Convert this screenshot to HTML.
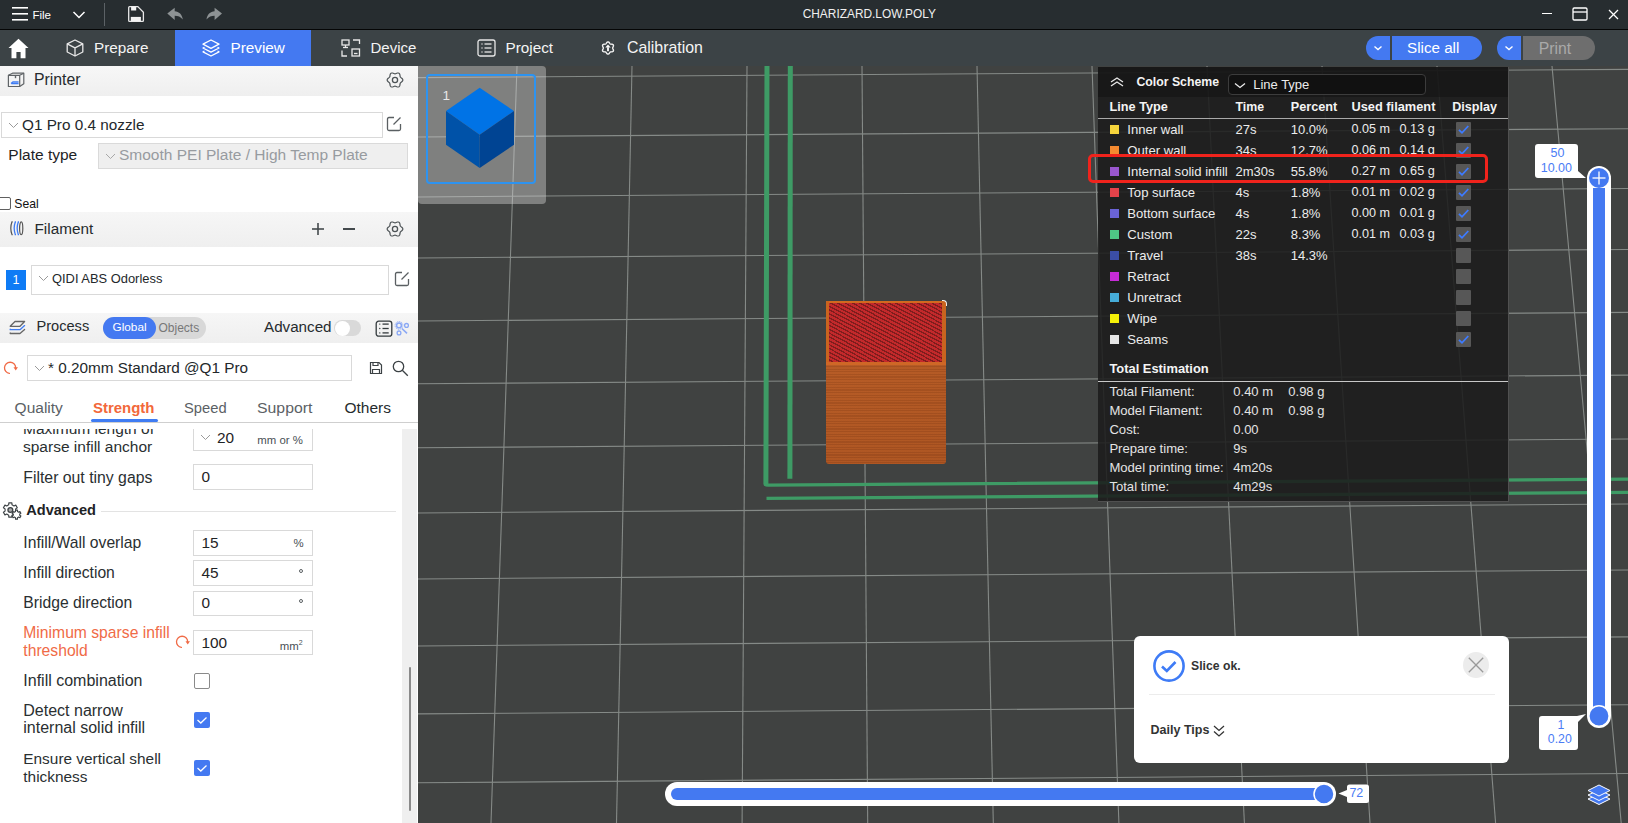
<!DOCTYPE html>
<html><head><meta charset="utf-8"><title>QIDI Studio</title>
<style>
*{margin:0;padding:0;box-sizing:border-box}
html,body{width:1628px;height:823px;overflow:hidden;background:#404241;font-family:"Liberation Sans",sans-serif;color:#262626}
.a{position:absolute}
.t{position:absolute;white-space:nowrap;line-height:1}
/* title bar */
#titlebar{left:0;top:0;width:1628px;height:29px;background:#272d30}
#titlesep{left:0;top:28.6px;width:1628px;height:1.4px;background:#050606}
#tabbar{left:0;top:30px;width:1628px;height:36px;background:#3c4346}
#ptab{left:175px;top:30px;width:136px;height:36px;background:#4479f1}
.wt{color:#fff}
/* sidebar */
#sidebar{left:0;top:66px;width:418px;height:757px;background:#fff;overflow:hidden}
.hdr{position:absolute;left:0;width:418px;background:linear-gradient(#f6f6f6,#f0f0f0)}
.box{position:absolute;border:1px solid #d9d9d9;background:#fff}
.lbl{position:absolute;white-space:nowrap;line-height:1;font-size:15.5px;color:#2a2f31}
.val{position:absolute;white-space:nowrap;line-height:1;font-size:15px;color:#1f2426}
.unit{position:absolute;white-space:nowrap;line-height:1;font-size:11.5px;color:#4a5055}
.chk{position:absolute;width:16px;height:16px;border-radius:1px}
/* viewport */
#vp{left:418px;top:66px;width:1210px;height:757px;background:#404241;overflow:hidden}
#grid line{stroke:#858a87;stroke-width:1.1}
/* legend panel */
#legend{left:1098px;top:66px;width:410px;height:436px;background:rgba(32,32,32,0.93);border-right:1px solid #4d4d4d;border-bottom:1px solid #4d4d4d}
.lt{position:absolute;white-space:nowrap;line-height:1;font-size:13px;color:#e8e8e8}
.lb{position:absolute;white-space:nowrap;line-height:1;font-size:12.7px;color:#f2f2f2;font-weight:bold}
.sw{position:absolute;width:9px;height:9px}
.dchk{position:absolute;width:15px;height:15px;background:#565656;border-radius:1px}

</style></head>
<body>
<div class="a" id="titlebar"></div><div class="a" id="titlesep"></div>
<svg class="a" style="left:11px;top:6px" width="18" height="16" viewBox="0 0 18 16"><g stroke="#fff" stroke-width="1.6"><line x1="1" y1="1.8" x2="17" y2="1.8"/><line x1="1" y1="7.8" x2="17" y2="7.8"/><line x1="1" y1="13.8" x2="17" y2="13.8"/></g></svg>
<div class="t" style="left:32.4px;top:8.9px;font-size:11.6px;color:#fff">File</div>
<svg class="a" style="left:72px;top:10px" width="14" height="10" viewBox="0 0 14 10"><polyline points="1.5,2 7,7.5 12.5,2" fill="none" stroke="#fff" stroke-width="1.5"/></svg>
<div class="a" style="left:104.0px;top:3.0px;width:1.0px;height:23.0px;background:#5c6266"></div>
<svg class="a" style="left:127px;top:5px" width="18" height="18" viewBox="0 0 18 18"><path d="M1.7 2.5 Q1.7 1.6 2.6 1.6 H10.8 L16.4 7.2 V15.4 Q16.4 16.3 15.5 16.3 H2.6 Q1.7 16.3 1.7 15.4 Z" fill="none" stroke="#e8e8e8" stroke-width="1.3"/><rect x="4.1" y="1.6" width="5.1" height="3.9" fill="#f4f4f4"/><rect x="3.8" y="11.9" width="10.1" height="4.4" fill="#f4f4f4"/></svg>
<svg class="a" style="left:166px;top:7px" width="18" height="14" viewBox="0 0 18 14"><path d="M1.3 6.5 L8.7 0.7 V4.3 C13 4.6 16.3 7.5 16.8 12.6 C14.5 9.8 12 8.8 8.7 8.8 V12.9 Z" fill="#8d9294"/></svg>
<svg class="a" style="left:205px;top:7px" width="18" height="14" viewBox="0 0 18 14"><path d="M17 6.5 L9.6 0.7 V4.3 C5.3 4.6 2 7.5 1.5 12.6 C3.8 9.8 6.3 8.8 9.6 8.8 V12.9 Z" fill="#8d9294"/></svg>
<div class="t" style="left:802.7px;top:8.5px;font-size:11.9px;color:#f0f0f0">CHARIZARD.LOW.POLY</div>
<div class="a" style="left:1542.0px;top:13.0px;width:10.0px;height:1.3px;background:#fff"></div>
<svg class="a" style="left:1572px;top:7px" width="16" height="14" viewBox="0 0 16 14"><rect x="1" y="1" width="14" height="12" rx="1.2" fill="none" stroke="#fff" stroke-width="1.3"/><line x1="1" y1="5" x2="15" y2="5" stroke="#fff" stroke-width="1.3"/></svg>
<svg class="a" style="left:1608px;top:9px" width="11" height="11" viewBox="0 0 11 11"><g stroke="#fff" stroke-width="1.2"><line x1="1" y1="1" x2="10" y2="10"/><line x1="10" y1="1" x2="1" y2="10"/></g></svg>
<div class="a" id="tabbar"></div><div class="a" id="ptab"></div>
<svg class="a" style="left:8px;top:38px" width="21" height="21" viewBox="0 0 21 21"><path d="M10.5 0.8 L20.5 10 H17.5 V20.3 H12.6 V14 H8.4 V20.3 H3.5 V10 H0.5 Z" fill="#fff"/></svg>
<svg class="a" style="left:66px;top:39px" width="18" height="18" viewBox="0 0 18 18"><g fill="none" stroke="#e8e8e8" stroke-width="1.3" stroke-linejoin="round"><path d="M9 1 L16.8 4.8 V13 L9 17 L1.2 13 V4.8 Z"/><path d="M1.2 4.8 L9 8.8 L16.8 4.8 M9 8.8 V17"/></g></svg>
<div class="t" style="left:94.0px;top:39.8px;font-size:15.3px;color:#f4f4f4">Prepare</div>
<svg class="a" style="left:202px;top:39px" width="18" height="18" viewBox="0 0 18 18"><g fill="none" stroke="#fff" stroke-width="1.3" stroke-linejoin="round"><path d="M9 1 L17 5.2 L9 9.4 L1 5.2 Z"/><path d="M2.5 8.2 L1 9 L9 13.2 L17 9 L15.5 8.2"/><path d="M2.5 12 L1 12.8 L9 17 L17 12.8 L15.5 12"/></g></svg>
<div class="t" style="left:230.5px;top:39.8px;font-size:15.3px;color:#fff">Preview</div>
<svg class="a" style="left:341px;top:39px" width="20" height="18" viewBox="0 0 20 18"><g fill="none" stroke="#e8e8e8" stroke-width="1.3"><rect x="1" y="1" width="7" height="5"/><line x1="4.5" y1="6" x2="4.5" y2="8.5"/><line x1="2" y1="8.5" x2="7" y2="8.5"/><path d="M12 1 H18.5 V5"/><path d="M1 11.5 V17 H6"/><rect x="11" y="10" width="7.5" height="7"/><line x1="13" y1="14.5" x2="16.5" y2="14.5"/></g></svg>
<div class="t" style="left:370.5px;top:39.8px;font-size:15.0px;color:#f4f4f4">Device</div>
<svg class="a" style="left:477px;top:39px" width="19" height="18" viewBox="0 0 19 18"><g fill="none" stroke="#e8e8e8" stroke-width="1.3"><rect x="1" y="1" width="17" height="16" rx="2"/><line x1="4.5" y1="5" x2="5.5" y2="5"/><line x1="7.5" y1="5" x2="14.5" y2="5"/><line x1="4.5" y1="9" x2="5.5" y2="9"/><line x1="7.5" y1="9" x2="14.5" y2="9"/><line x1="4.5" y1="13" x2="5.5" y2="13"/><line x1="7.5" y1="13" x2="14.5" y2="13"/></g></svg>
<div class="t" style="left:505.5px;top:39.8px;font-size:15.3px;color:#f4f4f4">Project</div>
<svg class="a" style="left:600px;top:40px" width="16" height="16" viewBox="0 0 16 16"><path d="M12.65 8.00 L12.73 8.41 L12.95 8.87 L13.22 9.40 L13.43 9.98 L13.48 10.56 L13.33 11.07 L12.96 11.47 L12.42 11.71 L11.82 11.82 L11.23 11.85 L10.72 11.89 L10.33 12.03 L10.01 12.31 L9.72 12.72 L9.40 13.22 L9.00 13.69 L8.53 14.03 L8.00 14.15 L7.47 14.03 L7.00 13.69 L6.60 13.22 L6.28 12.72 L5.99 12.31 L5.68 12.03 L5.28 11.89 L4.77 11.85 L4.18 11.82 L3.58 11.71 L3.04 11.47 L2.67 11.08 L2.52 10.56 L2.57 9.98 L2.78 9.40 L3.05 8.87 L3.27 8.41 L3.35 8.00 L3.27 7.59 L3.05 7.13 L2.78 6.60 L2.57 6.02 L2.52 5.44 L2.67 4.92 L3.04 4.53 L3.58 4.29 L4.18 4.18 L4.77 4.15 L5.28 4.11 L5.67 3.97 L5.99 3.69 L6.28 3.28 L6.60 2.78 L7.00 2.31 L7.47 1.97 L8.00 1.85 L8.53 1.97 L9.00 2.31 L9.40 2.78 L9.72 3.28 L10.01 3.69 L10.32 3.97 L10.72 4.11 L11.23 4.15 L11.82 4.18 L12.42 4.29 L12.96 4.53 L13.33 4.93 L13.48 5.44 L13.43 6.02 L13.22 6.60 L12.95 7.13 L12.73 7.59 Z" fill="none" stroke="#f0f0f0" stroke-width="1.4" stroke-linejoin="round"/><polygon points="8,4.4 5.3,7.5 10.7,7.5" fill="#fff"/><rect x="7.1" y="7.3" width="1.8" height="3.9" fill="#fff"/></svg>
<div class="t" style="left:627.0px;top:39.7px;font-size:15.9px;color:#f4f4f4">Calibration</div>
<div class="a" style="left:1366.0px;top:36.0px;width:24.0px;height:24.0px;background:#4479f1;border-radius:12px 0 0 12px"></div>
<div class="a" style="left:1392.0px;top:36.0px;width:90.0px;height:24.0px;background:#4479f1;border-radius:0 12px 12px 0"></div>
<svg class="a" style="left:1373px;top:44px" width="10" height="8" viewBox="0 0 10 8"><polyline points="1.5,2.5 5,5.5 8.5,2.5" fill="none" stroke="#fff" stroke-width="1.4"/></svg>
<div class="t" style="left:1407.0px;top:40.0px;font-size:15.2px;color:#fff">Slice all</div>
<div class="a" style="left:1497.0px;top:36.0px;width:24.0px;height:24.0px;background:#4479f1;border-radius:12px 0 0 12px"></div>
<div class="a" style="left:1523.0px;top:36.0px;width:72.0px;height:24.0px;background:#6e6e6e;border-radius:0 12px 12px 0"></div>
<svg class="a" style="left:1504px;top:44px" width="10" height="8" viewBox="0 0 10 8"><polyline points="1.5,2.5 5,5.5 8.5,2.5" fill="none" stroke="#fff" stroke-width="1.4"/></svg>
<div class="t" style="left:1538.7px;top:40.5px;font-size:15.8px;color:#a9a9a9">Print</div><div class="a" id="sidebar">
<div class="a" style="left:0.0px;top:0.0px;width:418.0px;height:30.0px;background:linear-gradient(#f7f7f7,#efefef)"></div>
<svg class="a" style="left:4px;top:2px" width="26" height="24" viewBox="0 0 26 24"><g fill="none" stroke="#5f6366" stroke-width="1.2" stroke-linejoin="round"><path d="M4.4 18.5 V7.3 L8.5 5.2 H19.8 V15.7 L15.7 18.5 Z"/><path d="M4.4 7.3 H15.7 V18.5 M15.7 7.3 L19.8 5.2"/><path d="M11.5 7.3 V10.2" stroke-width="1.4"/></g><g fill="none" stroke="#3f7cf3" stroke-width="1.3"><path d="M7 15.6 L9 14 H14.6 M7.3 15.6 H14.6"/></g></svg>
<div class="t" style="left:34.0px;top:6.3px;font-size:15.8px;color:#262b2e">Printer</div>
<svg class="a" style="left:386px;top:5px" width="18" height="18" viewBox="0 0 18 18"><path d="M16.85 9.00 L16.71 9.67 L16.31 10.29 L15.76 10.81 L15.18 11.25 L14.68 11.65 L14.33 12.07 L14.13 12.59 L14.04 13.23 L13.95 13.95 L13.77 14.69 L13.44 15.34 L12.93 15.80 L12.27 16.01 L11.54 15.98 L10.81 15.76 L10.14 15.48 L9.55 15.24 L9.00 15.15 L8.45 15.24 L7.86 15.48 L7.19 15.76 L6.46 15.98 L5.73 16.01 L5.08 15.80 L4.56 15.34 L4.23 14.69 L4.05 13.95 L3.96 13.23 L3.87 12.59 L3.67 12.08 L3.32 11.65 L2.82 11.25 L2.24 10.81 L1.69 10.29 L1.29 9.67 L1.15 9.00 L1.29 8.33 L1.69 7.71 L2.24 7.19 L2.82 6.75 L3.32 6.35 L3.67 5.92 L3.87 5.41 L3.96 4.77 L4.05 4.05 L4.23 3.31 L4.56 2.66 L5.07 2.20 L5.73 1.99 L6.46 2.02 L7.19 2.24 L7.86 2.52 L8.45 2.76 L9.00 2.85 L9.55 2.76 L10.14 2.52 L10.81 2.24 L11.54 2.02 L12.27 1.99 L12.92 2.20 L13.44 2.66 L13.77 3.31 L13.95 4.05 L14.04 4.77 L14.13 5.41 L14.33 5.93 L14.68 6.35 L15.18 6.75 L15.76 7.19 L16.31 7.71 L16.71 8.33 Z" fill="none" stroke="#4d5356" stroke-width="1.2" stroke-linejoin="round"/><circle cx="9" cy="9" r="2.6" fill="none" stroke="#4d5356" stroke-width="1.3"/></svg>
<div class="box" style="left:1.0px;top:46.0px;width:382.0px;height:26.0px;"></div>
<svg class="a" style="left:8px;top:56px" width="11" height="7" viewBox="0 0 11 7"><polyline points="1,1 5.5,5.5 10,1" fill="none" stroke="#9a9a9a" stroke-width="1"/></svg>
<div class="t" style="left:22.0px;top:51.1px;font-size:15.3px;color:#23282b">Q1 Pro 0.4 nozzle</div>
<svg class="a" style="left:386px;top:50px" width="16" height="16" viewBox="0 0 16 16"><path d="M8 1.5 H3 Q1.5 1.5 1.5 3 V13 Q1.5 14.5 3 14.5 H13 Q14.5 14.5 14.5 13 V8" fill="none" stroke="#5a5f62" stroke-width="1.3"/><line x1="7.5" y1="8.5" x2="14.5" y2="1.5" stroke="#5a5f62" stroke-width="1.3"/></svg>
<div class="t" style="left:8.3px;top:81.0px;font-size:15.5px;color:#1e2326">Plate type</div>
<div class="box" style="left:98.0px;top:77.0px;width:310.0px;height:26.0px;background:#efefef;border-color:#dadada"></div>
<svg class="a" style="left:105px;top:87px" width="11" height="7" viewBox="0 0 11 7"><polyline points="1,1 5.5,5.5 10,1" fill="none" stroke="#a8a8a8" stroke-width="1"/></svg>
<div class="t" style="left:119.0px;top:81.3px;font-size:15.5px;color:#979ba0">Smooth PEI Plate / High Temp Plate</div>
<div class="a" style="left:-3.0px;top:131.0px;width:13.5px;height:13.0px;border:1px solid #5f5f5f;border-radius:2px;background:#fff"></div>
<div class="t" style="left:14.3px;top:131.5px;font-size:12.2px;color:#111">Seal</div>
<div class="a" style="left:0.0px;top:146.0px;width:418.0px;height:35.0px;background:linear-gradient(#f6f6f6,#efefef)"></div>
<svg class="a" style="left:9px;top:155px" width="16" height="15" viewBox="0 0 16 15"><g fill="none" stroke-width="1.2"><path d="M3.7 0.8 H3 Q0.6 7.2 3 13.6 H3.7" stroke="#555"/><path d="M7 1 H6.3 Q4 7.2 6.3 13.6 H7" stroke="#3f7cf3" stroke-width="1.3"/><path d="M10 1 H9.3 Q7 7.2 9.3 13.6 H10" stroke="#3f7cf3" stroke-width="1.3"/><ellipse cx="12.2" cy="7.2" rx="1.6" ry="6.4" stroke="#555"/></g></svg>
<div class="t" style="left:34.5px;top:154.9px;font-size:15.3px;color:#262b2e">Filament</div>
<svg class="a" style="left:311px;top:156px" width="14" height="14" viewBox="0 0 14 14"><g stroke="#444a4d" stroke-width="1.6"><line x1="7" y1="1" x2="7" y2="13"/><line x1="1" y1="7" x2="13" y2="7"/></g></svg>
<div class="a" style="left:343.0px;top:162.2px;width:12.0px;height:1.6px;background:#444a4d"></div>
<svg class="a" style="left:386px;top:154px" width="18" height="18" viewBox="0 0 18 18"><path d="M16.85 9.00 L16.71 9.67 L16.31 10.29 L15.76 10.81 L15.18 11.25 L14.68 11.65 L14.33 12.07 L14.13 12.59 L14.04 13.23 L13.95 13.95 L13.77 14.69 L13.44 15.34 L12.93 15.80 L12.27 16.01 L11.54 15.98 L10.81 15.76 L10.14 15.48 L9.55 15.24 L9.00 15.15 L8.45 15.24 L7.86 15.48 L7.19 15.76 L6.46 15.98 L5.73 16.01 L5.08 15.80 L4.56 15.34 L4.23 14.69 L4.05 13.95 L3.96 13.23 L3.87 12.59 L3.67 12.08 L3.32 11.65 L2.82 11.25 L2.24 10.81 L1.69 10.29 L1.29 9.67 L1.15 9.00 L1.29 8.33 L1.69 7.71 L2.24 7.19 L2.82 6.75 L3.32 6.35 L3.67 5.92 L3.87 5.41 L3.96 4.77 L4.05 4.05 L4.23 3.31 L4.56 2.66 L5.07 2.20 L5.73 1.99 L6.46 2.02 L7.19 2.24 L7.86 2.52 L8.45 2.76 L9.00 2.85 L9.55 2.76 L10.14 2.52 L10.81 2.24 L11.54 2.02 L12.27 1.99 L12.92 2.20 L13.44 2.66 L13.77 3.31 L13.95 4.05 L14.04 4.77 L14.13 5.41 L14.33 5.93 L14.68 6.35 L15.18 6.75 L15.76 7.19 L16.31 7.71 L16.71 8.33 Z" fill="none" stroke="#4d5356" stroke-width="1.2" stroke-linejoin="round"/><circle cx="9" cy="9" r="2.6" fill="none" stroke="#4d5356" stroke-width="1.3"/></svg>
<div class="a" style="left:6.0px;top:204.0px;width:20.0px;height:20.0px;background:#0e7bf5"></div>
<div class="t" style="left:12.5px;top:207.5px;font-size:12.5px;color:#fff">1</div>
<div class="box" style="left:31.0px;top:199.0px;width:358.0px;height:30.0px;"></div>
<svg class="a" style="left:38px;top:209px" width="11" height="7" viewBox="0 0 11 7"><polyline points="1,1 5.5,5.5 10,1" fill="none" stroke="#9a9a9a" stroke-width="1"/></svg>
<div class="t" style="left:52.0px;top:206.7px;font-size:12.9px;color:#23282b">QIDI ABS Odorless</div>
<svg class="a" style="left:394px;top:205px" width="16" height="16" viewBox="0 0 16 16"><path d="M8 1.5 H3 Q1.5 1.5 1.5 3 V13 Q1.5 14.5 3 14.5 H13 Q14.5 14.5 14.5 13 V8" fill="none" stroke="#5a5f62" stroke-width="1.3"/><line x1="7.5" y1="8.5" x2="14.5" y2="1.5" stroke="#5a5f62" stroke-width="1.3"/></svg>
<div class="a" style="left:0.0px;top:247.0px;width:418.0px;height:30.0px;background:linear-gradient(#f6f6f6,#efefef)"></div>
<svg class="a" style="left:9px;top:254px" width="17" height="15" viewBox="0 0 17 15"><g fill="none" stroke-width="1.3" stroke-linejoin="round" stroke-linecap="round"><path d="M1.2 6.3 L6 1.5 H15.6 L11 6.3 Z" stroke="#666"/><path d="M1.2 9.2 V9.7 H11 L15.6 5.6" stroke="#3f7cf3"/><path d="M1.2 13 V13.5 H11 L15.6 9.4" stroke="#666"/></g></svg>
<div class="t" style="left:36.5px;top:252.7px;font-size:14.6px;color:#262b2e">Process</div>
<div class="a" style="left:103.0px;top:251.0px;width:103.0px;height:22.0px;background:#d8d8d8;border-radius:11px"></div>
<div class="a" style="left:103.0px;top:251.0px;width:53.0px;height:22.0px;background:#4479f1;border-radius:11px"></div>
<div class="t" style="left:112.5px;top:255.6px;font-size:11.8px;color:#fff">Global</div>
<div class="t" style="left:158.5px;top:255.6px;font-size:12.0px;color:#777">Objects</div>
<div class="t" style="left:264.0px;top:252.6px;font-size:15.2px;color:#262b2e">Advanced</div>
<div class="a" style="left:334.0px;top:254.0px;width:27.0px;height:16.0px;background:#d9d9d9;border-radius:8px"></div>
<div class="a" style="left:335.0px;top:254.5px;width:14.5px;height:15.0px;background:#fff;border-radius:50%"></div>
<svg class="a" style="left:374.5px;top:253.5px" width="18" height="17" viewBox="0 0 18 17"><g fill="none" stroke="#333a3d" stroke-width="1.3"><rect x="1.2" y="1.2" width="15.6" height="15" rx="2.5"/><line x1="7.5" y1="4.1" x2="13.7" y2="4.1"/><line x1="7.5" y1="8.5" x2="13.7" y2="8.5"/><line x1="7.5" y1="12.9" x2="13.7" y2="12.9"/></g><g fill="#333a3d"><circle cx="4.8" cy="4.1" r="0.7"/><circle cx="4.8" cy="8.5" r="0.7"/><circle cx="4.8" cy="12.9" r="0.7"/></g></svg>
<svg class="a" style="left:394px;top:253.5px" width="16" height="16" viewBox="0 0 16 16"><g fill="none" stroke="#8aa8f5"><circle cx="5" cy="5.4" r="2.4" stroke-width="1.5"/><circle cx="5" cy="5.4" r="3.9" stroke-width="0.9" stroke-dasharray="1.2 0.8"/><circle cx="12.5" cy="5.4" r="1.9" stroke-width="1.3"/><circle cx="5" cy="12.9" r="1.9" stroke-width="1.3"/><line x1="7.9" y1="8.5" x2="13" y2="13.3" stroke-width="1.6"/></g></svg>
<svg class="a" style="left:0px;top:289px" width="20" height="20" viewBox="0 0 20 20"><path d="M9.4 18.4 A5.6 5.6 0 1 1 15.7 12.6" fill="none" stroke="#f06b47" stroke-width="1.3" stroke-linecap="round"/><polygon points="13.5,12.2 18,12.2 15.7,15.4" fill="#f06b47"/></svg>
<div class="box" style="left:27.0px;top:289.0px;width:325.0px;height:26.0px;"></div>
<svg class="a" style="left:34px;top:299px" width="11" height="7" viewBox="0 0 11 7"><polyline points="1,1 5.5,5.5 10,1" fill="none" stroke="#9a9a9a" stroke-width="1"/></svg>
<div class="t" style="left:48.0px;top:293.9px;font-size:15.3px;color:#23282b">* 0.20mm Standard @Q1 Pro</div>
<svg class="a" style="left:369px;top:295px" width="14" height="14" viewBox="0 0 14 14"><g fill="none" stroke="#3c4245" stroke-width="1.2"><path d="M1.5 1.5 H10 L12.5 4 V12.5 H1.5 Z"/><path d="M4 1.5 V4.5 H9 V1.5"/><path d="M3.5 12.5 V8.5 H10.5 V12.5"/></g></svg>
<svg class="a" style="left:392px;top:294px" width="17" height="17" viewBox="0 0 17 17"><g fill="none" stroke="#3c4245" stroke-width="1.3"><circle cx="6.5" cy="6.5" r="5.2"/><line x1="10.3" y1="10.3" x2="15.8" y2="15.8"/></g></svg>
<div class="t" style="left:14.6px;top:333.8px;font-size:15.5px;color:#5b6165">Quality</div>
<div class="t" style="left:92.9px;top:333.8px;font-size:15.5px;font-weight:bold;color:#f2683a;transform:scaleX(0.965);transform-origin:0 0">Strength</div>
<div class="t" style="left:184.0px;top:333.8px;font-size:15.5px;color:#5b6165;transform:scaleX(0.95);transform-origin:0 0">Speed</div>
<div class="t" style="left:257.0px;top:333.8px;font-size:15.5px;color:#5b6165;transform:scaleX(1.02);transform-origin:0 0">Support</div>
<div class="t" style="left:344.5px;top:333.8px;font-size:15.5px;color:#262b2e">Others</div>
<div class="a" style="left:90.5px;top:352.8px;width:67.0px;height:3.0px;background:#3f7cf3;border-radius:2px"></div>
<div class="a" style="left:0.0px;top:356.0px;width:418.0px;height:1.0px;background:#cfcfcf"></div>
<div class="a" style="left:0;top:363px;width:418px;height:394px;overflow:hidden">
<div class="a" style="left:402.0px;top:0.0px;width:15.0px;height:394.0px;background:#efefef"></div>
<div class="a" style="left:409.3px;top:238.0px;width:2.2px;height:144.0px;background:#8a8a8a;border-radius:1px"></div>
<div class="t" style="left:23.0px;top:-8.0px;font-size:15.5px;color:#2a2f31">Maximum length of</div>
<div class="t" style="left:23.0px;top:9.7px;font-size:15.5px;color:#2a2f31">sparse infill anchor</div>
<div class="box" style="left:193.0px;top:-19.0px;width:120.0px;height:40.5px;"></div>
<svg class="a" style="left:200px;top:5px" width="11" height="7" viewBox="0 0 11 7"><polyline points="1,1 5.5,5.5 10,1" fill="none" stroke="#9a9a9a" stroke-width="1"/></svg>
<div class="t" style="left:217.0px;top:0.8px;font-size:15.4px;color:#1f2426">20</div>
<div class="t" style="left:257.3px;top:5.7px;font-size:11.4px;color:#4a5055">mm or %</div>
<div class="t" style="left:23.3px;top:40.5px;font-size:15.8px;color:#2a2f31">Filter out tiny gaps</div>
<div class="box" style="left:193.0px;top:35.3px;width:120.0px;height:25.4px;"></div>
<div class="t" style="left:201.4px;top:39.7px;font-size:15.4px;color:#1f2426">0</div>
<svg class="a" style="left:0px;top:69.0px" width="24" height="24" viewBox="0 0 24 24"><path d="M8.68 6.86 L8.83 4.86 L11.87 4.86 L12.02 6.86 L13.96 7.99 L15.77 7.12 L17.29 9.74 L15.63 10.88 L15.63 13.12 L17.29 14.26 L15.77 16.88 L13.96 16.01 L12.02 17.14 L11.87 19.14 L8.83 19.14 L8.68 17.14 L6.74 16.01 L4.93 16.88 L3.41 14.26 L5.07 13.12 L5.07 10.88 L3.41 9.74 L4.93 7.12 L6.74 7.99 Z" fill="#fff" stroke="#3c4245" stroke-width="1.15" stroke-linejoin="round"/><circle cx="10.35" cy="12" r="2.4" fill="#aaa" stroke="#3c4245" stroke-width="1.3"/><path d="M15.48 13.46 L15.54 12.10 L17.46 12.10 L17.52 13.46 L18.71 14.15 L19.92 13.52 L20.87 15.18 L19.73 15.91 L19.73 17.29 L20.87 18.02 L19.92 19.68 L18.71 19.05 L17.52 19.74 L17.46 21.10 L15.54 21.10 L15.48 19.74 L14.29 19.05 L13.08 19.68 L12.13 18.02 L13.27 17.29 L13.27 15.91 L12.13 15.18 L13.08 13.52 L14.29 14.15 Z" fill="#fff" stroke="#3c4245" stroke-width="1.15" stroke-linejoin="round"/></svg>
<div class="t" style="left:26.2px;top:73.7px;font-size:14.6px;font-weight:bold;color:#1e2326">Advanced</div>
<div class="a" style="left:101.4px;top:82.0px;width:294.2px;height:1.0px;background:#e3e3e3"></div>
<div class="t" style="left:23.3px;top:106.3px;font-size:15.7px;color:#2a2f31">Infill/Wall overlap</div>
<div class="box" style="left:193.0px;top:101.4px;width:120.0px;height:25.2px;"></div>
<div class="t" style="left:201.5px;top:106.3px;font-size:15.4px;color:#1f2426">15</div>
<div class="t" style="left:293.5px;top:108.6px;font-size:11.4px;color:#4a5055">%</div>
<div class="t" style="left:23.3px;top:136.0px;font-size:15.7px;color:#2a2f31">Infill direction</div>
<div class="box" style="left:193.0px;top:131.4px;width:120.0px;height:25.2px;"></div>
<div class="t" style="left:201.5px;top:136.3px;font-size:15.4px;color:#1f2426">45</div>
<div class="a" style="left:298.8px;top:140.0px;width:4.4px;height:4.4px;border:1px solid #5a5f62;border-radius:50%"></div>
<div class="t" style="left:23.3px;top:165.8px;font-size:15.7px;color:#2a2f31">Bridge direction</div>
<div class="box" style="left:193.0px;top:161.5px;width:120.0px;height:25.2px;"></div>
<div class="t" style="left:201.5px;top:166.4px;font-size:15.4px;color:#1f2426">0</div>
<div class="a" style="left:298.8px;top:170.1px;width:4.4px;height:4.4px;border:1px solid #5a5f62;border-radius:50%"></div>
<div class="t" style="left:23.3px;top:195.6px;font-size:15.7px;color:#f06b47">Minimum sparse infill</div>
<div class="t" style="left:23.3px;top:213.5px;font-size:15.7px;color:#f06b47">threshold</div>
<svg class="a" style="left:172.1px;top:200.3px" width="20" height="20" viewBox="0 0 20 20"><path d="M9.4 18.4 A5.6 5.6 0 1 1 15.7 12.6" fill="none" stroke="#f06b47" stroke-width="1.3" stroke-linecap="round"/><polygon points="13.5,12.2 18,12.2 15.7,15.4" fill="#f06b47"/></svg>
<div class="box" style="left:193.0px;top:200.6px;width:120.0px;height:25.2px;"></div>
<div class="t" style="left:201.5px;top:205.7px;font-size:15.4px;color:#1f2426">100</div>
<div class="t" style="left:279.7px;top:209.7px;font-size:11.4px;color:#4a5055">mm<sup style="font-size:7px;vertical-align:5px">2</sup></div>
<div class="t" style="left:23.3px;top:243.7px;font-size:16.0px;color:#2a2f31">Infill combination</div>
<div class="a" style="left:194.0px;top:244.0px;width:16.0px;height:16.0px;border:1px solid #8a8a8a;border-radius:2px;background:#fff"></div>
<div class="t" style="left:23.3px;top:274.0px;font-size:16.0px;color:#2a2f31">Detect narrow</div>
<div class="t" style="left:23.3px;top:291.4px;font-size:16.0px;color:#2a2f31">internal solid infill</div>
<div class="a" style="left:194.0px;top:283.0px;width:16.0px;height:16.0px;background:#4479f1;border-radius:2px"><svg width="16" height="16" viewBox="0 0 16 16"><polyline points="3.5,8 6.8,11 12.5,5.5" fill="none" stroke="#fff" stroke-width="1.3"/></svg></div>
<div class="t" style="left:23.3px;top:321.7px;font-size:15.4px;color:#2a2f31">Ensure vertical shell</div>
<div class="t" style="left:23.3px;top:339.9px;font-size:15.4px;color:#2a2f31">thickness</div>
<div class="a" style="left:194.0px;top:331.0px;width:16.0px;height:16.0px;background:#4479f1;border-radius:2px"><svg width="16" height="16" viewBox="0 0 16 16"><polyline points="3.5,8 6.8,11 12.5,5.5" fill="none" stroke="#fff" stroke-width="1.3"/></svg></div>
</div>
</div><div class="a" id="vp">
<svg id="grid" class="a" style="left:0;top:0" width="1210" height="757"><line x1="-131.0" y1="0" x2="-178.2" y2="757"/>
<line x1="-16.0" y1="0" x2="-52.6" y2="757"/>
<line x1="99.0" y1="0" x2="73.0" y2="757"/>
<line x1="214.0" y1="0" x2="198.5" y2="757"/>
<line x1="329.0" y1="0" x2="324.1" y2="757"/>
<line x1="444.0" y1="0" x2="449.7" y2="757"/>
<line x1="559.0" y1="0" x2="575.3" y2="757"/>
<line x1="674.0" y1="0" x2="700.9" y2="757"/>
<line x1="789.0" y1="0" x2="826.4" y2="757"/>
<line x1="904.0" y1="0" x2="952.0" y2="757"/>
<line x1="1019.0" y1="0" x2="1077.6" y2="757"/>
<line x1="1134.0" y1="0" x2="1203.2" y2="757"/>
<line x1="1249.0" y1="0" x2="1328.8" y2="757"/>
<line x1="0" y1="-48.09" x2="1210" y2="-56.27"/>
<line x1="0" y1="11.62" x2="1210" y2="3.36"/>
<line x1="0" y1="71.04" x2="1210" y2="62.69"/>
<line x1="0" y1="130.95" x2="1210" y2="122.51"/>
<line x1="0" y1="191.97" x2="1210" y2="183.44"/>
<line x1="0" y1="254.98" x2="1210" y2="246.36"/>
<line x1="0" y1="317.80" x2="1210" y2="309.09"/>
<line x1="0" y1="381.81" x2="1210" y2="373.01"/>
<line x1="0" y1="446.93" x2="1210" y2="438.03"/>
<line x1="0" y1="512.95" x2="1210" y2="503.95"/>
<line x1="0" y1="579.96" x2="1210" y2="570.87"/>
<line x1="0" y1="647.88" x2="1210" y2="638.68"/>
<line x1="0" y1="716.80" x2="1210" y2="707.50"/>
<line x1="0" y1="787.12" x2="1210" y2="777.72"/></svg>
<svg class="a" style="left:0;top:0" width="1210" height="757"><g stroke="#3e9b65" fill="none" stroke-linecap="round"><line x1="349" y1="-5" x2="347.9" y2="418" stroke-width="5"/><line x1="372.29999999999995" y1="-5" x2="371.9" y2="412.8" stroke-width="5" stroke-linecap="butt"/><path d="M347.9 417 Q347.9 419.1 350 419.1 L1222 413" stroke-width="3.3"/><line x1="348.5" y1="432.4" x2="1222" y2="426.3" stroke-width="3.2" stroke-linecap="butt"/></g></svg>
<div class="a" style="left:407.5px;top:235.0px;width:120.5px;height:162.5px;background:repeating-linear-gradient(180deg,rgba(60,20,0,0.10) 0px,rgba(60,20,0,0.10) 1.2px,rgba(255,140,60,0.04) 1.2px,rgba(255,140,60,0.04) 2.6px),linear-gradient(165deg,#b95d27,#aa5321);border-radius:1px 1px 3px 3px"></div>
<div class="a" style="left:408.0px;top:234.6px;width:119.5px;height:2.4px;background:#d2691f"></div>
<div class="a" style="left:407.5px;top:235.0px;width:3.5px;height:62.0px;background:#c9641f"></div>
<div class="a" style="left:524.4px;top:235.0px;width:3.6px;height:62.0px;background:#c9641f"></div>
<div class="a" style="left:410.7px;top:236.5px;width:113.7px;height:60.2px;background:repeating-linear-gradient(28deg,#c3292b 0px,#c3292b 2.1px,#7e1d1d 2.1px,#7e1d1d 3.4px)"></div>
<div class="a" style="left:408.0px;top:296.0px;width:119.5px;height:2.5px;background:#cf6726"></div>
<div class="a" style="left:524.0px;top:234.0px;width:5.0px;height:6.0px;border-top:1.5px solid #eee;border-right:1.5px solid #eee;border-radius:0 4px 0 0"></div>
<div class="a" style="left:0.0px;top:0.0px;width:128.0px;height:138.0px;background:rgba(215,215,215,0.42);border-radius:0 4px 4px 4px"></div>
<div class="a" style="left:8.0px;top:7.7px;width:110.2px;height:110.6px;border:2px solid #2d93f0;border-radius:4px"></div>
<svg class="a" style="left:28.0px;top:21.0px" width="70" height="82" viewBox="446 87 70 82"><polygon points="479.7,87.7 514,111 479.7,134.7 446,111" fill="#0073e6"/><polygon points="446,111 479.7,134.7 479.7,167.9 446,144.8" fill="#0052a8"/><polygon points="479.7,134.7 514,111 514,144.8 479.7,167.9" fill="#004493"/></svg>
<div class="t" style="left:24.5px;top:23.3px;font-size:13.5px;color:#e8e8e8">1</div>
<div class="a" style="left:680.0px;top:0.5px;width:410.5px;height:435.5px;background:rgba(27,27,27,0.87);border-right:1px solid #505050;border-bottom:1px solid #505050"></div>
<div class="a" style="left:680.0px;top:0.5px;width:410.0px;height:30.5px;background:rgba(20,20,20,0.6)"></div>
<svg class="a" style="left:692.0px;top:11.0px" width="14" height="10" viewBox="0 0 14 10"><g fill="none" stroke="#e8e8e8" stroke-width="1.3"><polyline points="1,5 7,1 13,5"/><polyline points="1,9 7,5 13,9"/></g></svg>
<div class="t" style="left:718.4px;top:9.5px;font-size:12.3px;font-weight:bold;color:#f4f4f4">Color Scheme</div>
<div class="a" style="left:810.4px;top:8.4px;width:197.6px;height:20.2px;background:#111;border:1px solid #3c3c3c;border-radius:4px"></div>
<svg class="a" style="left:815.5px;top:15.5px" width="12" height="7" viewBox="0 0 12 7"><polyline points="1,1.5 6,5.5 11,1.5" fill="none" stroke="#eee" stroke-width="1.3"/></svg>
<div class="t" style="left:835.2px;top:12.2px;font-size:13.0px;color:#ececec">Line Type</div>
<div class="t" style="left:691.6px;top:34.7px;font-size:12.7px;font-weight:bold;color:#f4f4f4">Line Type</div>
<div class="t" style="left:817.5px;top:34.7px;font-size:12.35px;font-weight:bold;color:#f4f4f4">Time</div>
<div class="t" style="left:872.7px;top:34.7px;font-size:12.7px;font-weight:bold;color:#f4f4f4">Percent</div>
<div class="t" style="left:933.5px;top:34.7px;font-size:12.8px;font-weight:bold;color:#f4f4f4">Used filament</div>
<div class="t" style="left:1034.2px;top:34.7px;font-size:12.6px;font-weight:bold;color:#f4f4f4">Display</div>
<div class="a" style="left:680.0px;top:52.3px;width:410.0px;height:1.2px;background:#a9a9a9"></div>
<div class="a" style="left:692.0px;top:59.1px;width:8.8px;height:8.8px;background:#f6d53c"></div>
<div class="t" style="left:709.3px;top:57.2px;font-size:13.1px;color:#ececec">Inner wall</div>
<div class="t" style="left:817.5px;top:57.2px;font-size:13.0px;color:#ececec">27s</div>
<div class="t" style="left:872.8px;top:57.2px;font-size:13.0px;color:#ececec">10.0%</div>
<div class="t" style="left:933.5px;top:57.3px;font-size:12.6px;color:#ececec">0.05 m</div>
<div class="t" style="left:981.5px;top:57.3px;font-size:12.7px;color:#ececec">0.13 g</div>
<div class="a" style="left:1038.3px;top:56.2px;width:15.2px;height:15.0px;background:#575757;border-radius:1px"><svg width="15" height="15" viewBox="0 0 15 15"><polyline points="3,7.8 6,10.8 12.3,4" fill="none" stroke="#3e7bff" stroke-width="1.8"/></svg></div>
<div class="a" style="left:692.0px;top:80.1px;width:8.8px;height:8.8px;background:#f58a30"></div>
<div class="t" style="left:709.3px;top:78.2px;font-size:13.1px;color:#ececec">Outer wall</div>
<div class="t" style="left:817.5px;top:78.2px;font-size:13.0px;color:#ececec">34s</div>
<div class="t" style="left:872.8px;top:78.2px;font-size:13.0px;color:#ececec">12.7%</div>
<div class="t" style="left:933.5px;top:78.3px;font-size:12.6px;color:#ececec">0.06 m</div>
<div class="t" style="left:981.5px;top:78.3px;font-size:12.7px;color:#ececec">0.14 g</div>
<div class="a" style="left:1038.3px;top:77.2px;width:15.2px;height:15.0px;background:#575757;border-radius:1px"><svg width="15" height="15" viewBox="0 0 15 15"><polyline points="3,7.8 6,10.8 12.3,4" fill="none" stroke="#3e7bff" stroke-width="1.8"/></svg></div>
<div class="a" style="left:692.0px;top:101.1px;width:8.8px;height:8.8px;background:#9a57d0"></div>
<div class="t" style="left:709.3px;top:99.2px;font-size:13.1px;color:#ececec">Internal solid infill</div>
<div class="t" style="left:817.5px;top:99.2px;font-size:13.0px;color:#ececec">2m30s</div>
<div class="t" style="left:872.8px;top:99.2px;font-size:13.0px;color:#ececec">55.8%</div>
<div class="t" style="left:933.5px;top:99.3px;font-size:12.6px;color:#ececec">0.27 m</div>
<div class="t" style="left:981.5px;top:99.3px;font-size:12.7px;color:#ececec">0.65 g</div>
<div class="a" style="left:1038.3px;top:98.2px;width:15.2px;height:15.0px;background:#575757;border-radius:1px"><svg width="15" height="15" viewBox="0 0 15 15"><polyline points="3,7.8 6,10.8 12.3,4" fill="none" stroke="#3e7bff" stroke-width="1.8"/></svg></div>
<div class="a" style="left:692.0px;top:122.1px;width:8.8px;height:8.8px;background:#e4434a"></div>
<div class="t" style="left:709.3px;top:120.2px;font-size:13.1px;color:#ececec">Top surface</div>
<div class="t" style="left:817.5px;top:120.2px;font-size:13.0px;color:#ececec">4s</div>
<div class="t" style="left:872.8px;top:120.2px;font-size:13.0px;color:#ececec">1.8%</div>
<div class="t" style="left:933.5px;top:120.3px;font-size:12.6px;color:#ececec">0.01 m</div>
<div class="t" style="left:981.5px;top:120.3px;font-size:12.7px;color:#ececec">0.02 g</div>
<div class="a" style="left:1038.3px;top:119.2px;width:15.2px;height:15.0px;background:#575757;border-radius:1px"><svg width="15" height="15" viewBox="0 0 15 15"><polyline points="3,7.8 6,10.8 12.3,4" fill="none" stroke="#3e7bff" stroke-width="1.8"/></svg></div>
<div class="a" style="left:692.0px;top:143.1px;width:8.8px;height:8.8px;background:#6a63d6"></div>
<div class="t" style="left:709.3px;top:141.2px;font-size:13.1px;color:#ececec">Bottom surface</div>
<div class="t" style="left:817.5px;top:141.2px;font-size:13.0px;color:#ececec">4s</div>
<div class="t" style="left:872.8px;top:141.2px;font-size:13.0px;color:#ececec">1.8%</div>
<div class="t" style="left:933.5px;top:141.3px;font-size:12.6px;color:#ececec">0.00 m</div>
<div class="t" style="left:981.5px;top:141.3px;font-size:12.7px;color:#ececec">0.01 g</div>
<div class="a" style="left:1038.3px;top:140.2px;width:15.2px;height:15.0px;background:#575757;border-radius:1px"><svg width="15" height="15" viewBox="0 0 15 15"><polyline points="3,7.8 6,10.8 12.3,4" fill="none" stroke="#3e7bff" stroke-width="1.8"/></svg></div>
<div class="a" style="left:692.0px;top:164.1px;width:8.8px;height:8.8px;background:#4ec585"></div>
<div class="t" style="left:709.3px;top:162.2px;font-size:13.1px;color:#ececec">Custom</div>
<div class="t" style="left:817.5px;top:162.2px;font-size:13.0px;color:#ececec">22s</div>
<div class="t" style="left:872.8px;top:162.2px;font-size:13.0px;color:#ececec">8.3%</div>
<div class="t" style="left:933.5px;top:162.3px;font-size:12.6px;color:#ececec">0.01 m</div>
<div class="t" style="left:981.5px;top:162.3px;font-size:12.7px;color:#ececec">0.03 g</div>
<div class="a" style="left:1038.3px;top:161.2px;width:15.2px;height:15.0px;background:#575757;border-radius:1px"><svg width="15" height="15" viewBox="0 0 15 15"><polyline points="3,7.8 6,10.8 12.3,4" fill="none" stroke="#3e7bff" stroke-width="1.8"/></svg></div>
<div class="a" style="left:692.0px;top:185.1px;width:8.8px;height:8.8px;background:#3b4ea6"></div>
<div class="t" style="left:709.3px;top:183.2px;font-size:13.1px;color:#ececec">Travel</div>
<div class="t" style="left:817.5px;top:183.2px;font-size:13.0px;color:#ececec">38s</div>
<div class="t" style="left:872.8px;top:183.2px;font-size:13.0px;color:#ececec">14.3%</div>
<div class="a" style="left:1038.3px;top:182.2px;width:15.2px;height:15.0px;background:#575757;border-radius:1px"></div>
<div class="a" style="left:692.0px;top:206.1px;width:8.8px;height:8.8px;background:#c62bd6"></div>
<div class="t" style="left:709.3px;top:204.2px;font-size:13.1px;color:#ececec">Retract</div>
<div class="a" style="left:1038.3px;top:203.2px;width:15.2px;height:15.0px;background:#575757;border-radius:1px"></div>
<div class="a" style="left:692.0px;top:227.1px;width:8.8px;height:8.8px;background:#46acd8"></div>
<div class="t" style="left:709.3px;top:225.2px;font-size:13.1px;color:#ececec">Unretract</div>
<div class="a" style="left:1038.3px;top:224.2px;width:15.2px;height:15.0px;background:#575757;border-radius:1px"></div>
<div class="a" style="left:692.0px;top:248.1px;width:8.8px;height:8.8px;background:#f4f008"></div>
<div class="t" style="left:709.3px;top:246.2px;font-size:13.1px;color:#ececec">Wipe</div>
<div class="a" style="left:1038.3px;top:245.2px;width:15.2px;height:15.0px;background:#575757;border-radius:1px"></div>
<div class="a" style="left:692.0px;top:269.1px;width:8.8px;height:8.8px;background:#e6e6e6"></div>
<div class="t" style="left:709.3px;top:267.2px;font-size:13.1px;color:#ececec">Seams</div>
<div class="a" style="left:1038.3px;top:266.2px;width:15.2px;height:15.0px;background:#575757;border-radius:1px"><svg width="15" height="15" viewBox="0 0 15 15"><polyline points="3,7.8 6,10.8 12.3,4" fill="none" stroke="#3e7bff" stroke-width="1.8"/></svg></div>
<div class="a" style="left:670.4px;top:87.7px;width:399.6px;height:29.6px;border:3px solid #f0231c;border-radius:5px"></div>
<div class="t" style="left:691.4px;top:297.1px;font-size:12.9px;font-weight:bold;color:#f4f4f4">Total Estimation</div>
<div class="a" style="left:680.0px;top:314.6px;width:410.0px;height:1.2px;background:#c8c8c8"></div>
<div class="t" style="left:691.4px;top:319.2px;font-size:13.1px;color:#e4e4e4">Total Filament:</div>
<div class="t" style="left:815.3px;top:319.2px;font-size:13.0px;color:#e4e4e4">0.40 m</div>
<div class="t" style="left:870.3px;top:319.2px;font-size:13.0px;color:#e4e4e4">0.98 g</div>
<div class="t" style="left:691.4px;top:338.2px;font-size:13.1px;color:#e4e4e4">Model Filament:</div>
<div class="t" style="left:815.3px;top:338.2px;font-size:13.0px;color:#e4e4e4">0.40 m</div>
<div class="t" style="left:870.3px;top:338.2px;font-size:13.0px;color:#e4e4e4">0.98 g</div>
<div class="t" style="left:691.4px;top:357.2px;font-size:13.1px;color:#e4e4e4">Cost:</div>
<div class="t" style="left:815.3px;top:357.2px;font-size:13.0px;color:#e4e4e4">0.00</div>
<div class="t" style="left:691.4px;top:376.2px;font-size:13.1px;color:#e4e4e4">Prepare time:</div>
<div class="t" style="left:815.3px;top:376.2px;font-size:13.0px;color:#e4e4e4">9s</div>
<div class="t" style="left:691.4px;top:395.2px;font-size:13.1px;color:#e4e4e4">Model printing time:</div>
<div class="t" style="left:815.3px;top:395.2px;font-size:13.0px;color:#e4e4e4">4m20s</div>
<div class="t" style="left:691.4px;top:414.2px;font-size:13.1px;color:#e4e4e4">Total time:</div>
<div class="t" style="left:815.3px;top:414.2px;font-size:13.0px;color:#e4e4e4">4m29s</div>
<div class="a" style="left:1169.0px;top:100.0px;width:24.0px;height:561.5px;background:#fff;border-radius:12px"></div>
<div class="a" style="left:1175.0px;top:122.0px;width:12.0px;height:528.0px;background:#4479f1"></div>
<svg class="a" style="left:1169.0px;top:100.0px" width="24" height="24" viewBox="0 0 24 24"><circle cx="12" cy="12" r="10" fill="#4479f1"/><g stroke="#fff" stroke-width="1.3"><line x1="12" y1="5.5" x2="12" y2="18.5"/><line x1="5.5" y1="12" x2="18.5" y2="12"/></g></svg>
<svg class="a" style="left:1169.0px;top:637.6px" width="24" height="24" viewBox="0 0 24 24"><circle cx="12" cy="12" r="10.2" fill="#4479f1" stroke="#fff" stroke-width="1.6"/></svg>
<svg class="a" style="left:1117.0px;top:78.0px" width="52" height="36" viewBox="0 0 52 36"><path d="M3 0 H40 Q43 0 43 3 V27 L51 34 H3 Q0 34 0 31 V3 Q0 0 3 0 Z" fill="#fff"/></svg>
<div class="t" style="left:1132.5px;top:80.8px;font-size:12.5px;color:#4a7cf5">50</div>
<div class="t" style="left:1122.7px;top:96.0px;font-size:12.5px;color:#4a7cf5">10.00</div>
<svg class="a" style="left:1121.0px;top:648.0px" width="48" height="36" viewBox="0 0 48 36"><path d="M0 5 Q0 2 3 2 H38 L47 0 L39 8 V33 Q39 36 36 36 H3 Q0 36 0 33 Z" fill="#fff"/></svg>
<div class="t" style="left:1139.5px;top:652.8px;font-size:12.3px;color:#4a7cf5">1</div>
<div class="t" style="left:1129.8px;top:667.3px;font-size:12.3px;color:#4a7cf5">0.20</div>
<svg class="a" style="left:1169.0px;top:717.5px" width="24" height="22" viewBox="0 0 24 22"><g fill="#4479f1" stroke="#fff" stroke-width="1" stroke-linejoin="round"><path d="M12 10 L23 15 L12 20.5 L1 15 Z"/><path d="M12 6 L23 11 L12 16.5 L1 11 Z"/><path d="M12 1 L23 6.5 L12 12 L1 6.5 Z"/></g></svg>
<div class="a" style="left:247.0px;top:716.0px;width:671.0px;height:24.0px;background:#fff;border-radius:12px"></div>
<div class="a" style="left:253.0px;top:722.0px;width:645.0px;height:12.0px;background:#4479f1;border-radius:6px 0 0 6px"></div>
<svg class="a" style="left:894.0px;top:716.0px" width="24" height="24" viewBox="0 0 24 24"><circle cx="12" cy="12" r="10" fill="#4479f1" stroke="#fff" stroke-width="1.5"/></svg>
<svg class="a" style="left:919.5px;top:718.3px" width="32" height="20" viewBox="0 0 32 20"><path d="M9 3 Q9 0.5 11.5 0.5 H28.5 Q31 0.5 31 3 V16.5 Q31 19 28.5 19 H11.5 Q9 19 9 16.5 V13 L0.5 9.5 L9 6 Z" fill="#fff"/></svg>
<div class="t" style="left:931.4px;top:720.5px;font-size:12.5px;color:#4a7cf5">72</div>
<div class="a" style="left:716.2px;top:570.0px;width:374.8px;height:127.0px;background:#fff;border-radius:6px"></div>
<svg class="a" style="left:734.0px;top:583.0px" width="34" height="34" viewBox="0 0 34 34"><circle cx="17" cy="17" r="14.6" fill="none" stroke="#3e7bf6" stroke-width="2.6"/><polyline points="10,17.5 14.8,22 23.5,13" fill="none" stroke="#3e7bf6" stroke-width="2.6"/></svg>
<div class="t" style="left:773.1px;top:594.0px;font-size:12.2px;font-weight:bold;color:#333">Slice ok.</div>
<div class="a" style="left:1045.1px;top:586.0px;width:26.0px;height:26.0px;background:#ececec;border-radius:50%"></div>
<svg class="a" style="left:1050.0px;top:591.0px" width="16" height="16" viewBox="0 0 16 16"><g stroke="#9a9a9a" stroke-width="1.3"><line x1="0.8" y1="0.8" x2="15.2" y2="15.2"/><line x1="15.2" y1="0.8" x2="0.8" y2="15.2"/></g></svg>
<div class="a" style="left:731.3px;top:628.2px;width:345.5px;height:1.0px;background:#ececec"></div>
<div class="t" style="left:732.6px;top:658.0px;font-size:12.5px;font-weight:bold;color:#333">Daily Tips</div>
<svg class="a" style="left:794.5px;top:658.5px" width="12" height="13" viewBox="0 0 12 13"><g fill="none" stroke="#333" stroke-width="1.3"><polyline points="1,1 6,5.5 11,1"/><polyline points="1,6.5 6,11 11,6.5"/></g></svg>
</div>
</body></html>
